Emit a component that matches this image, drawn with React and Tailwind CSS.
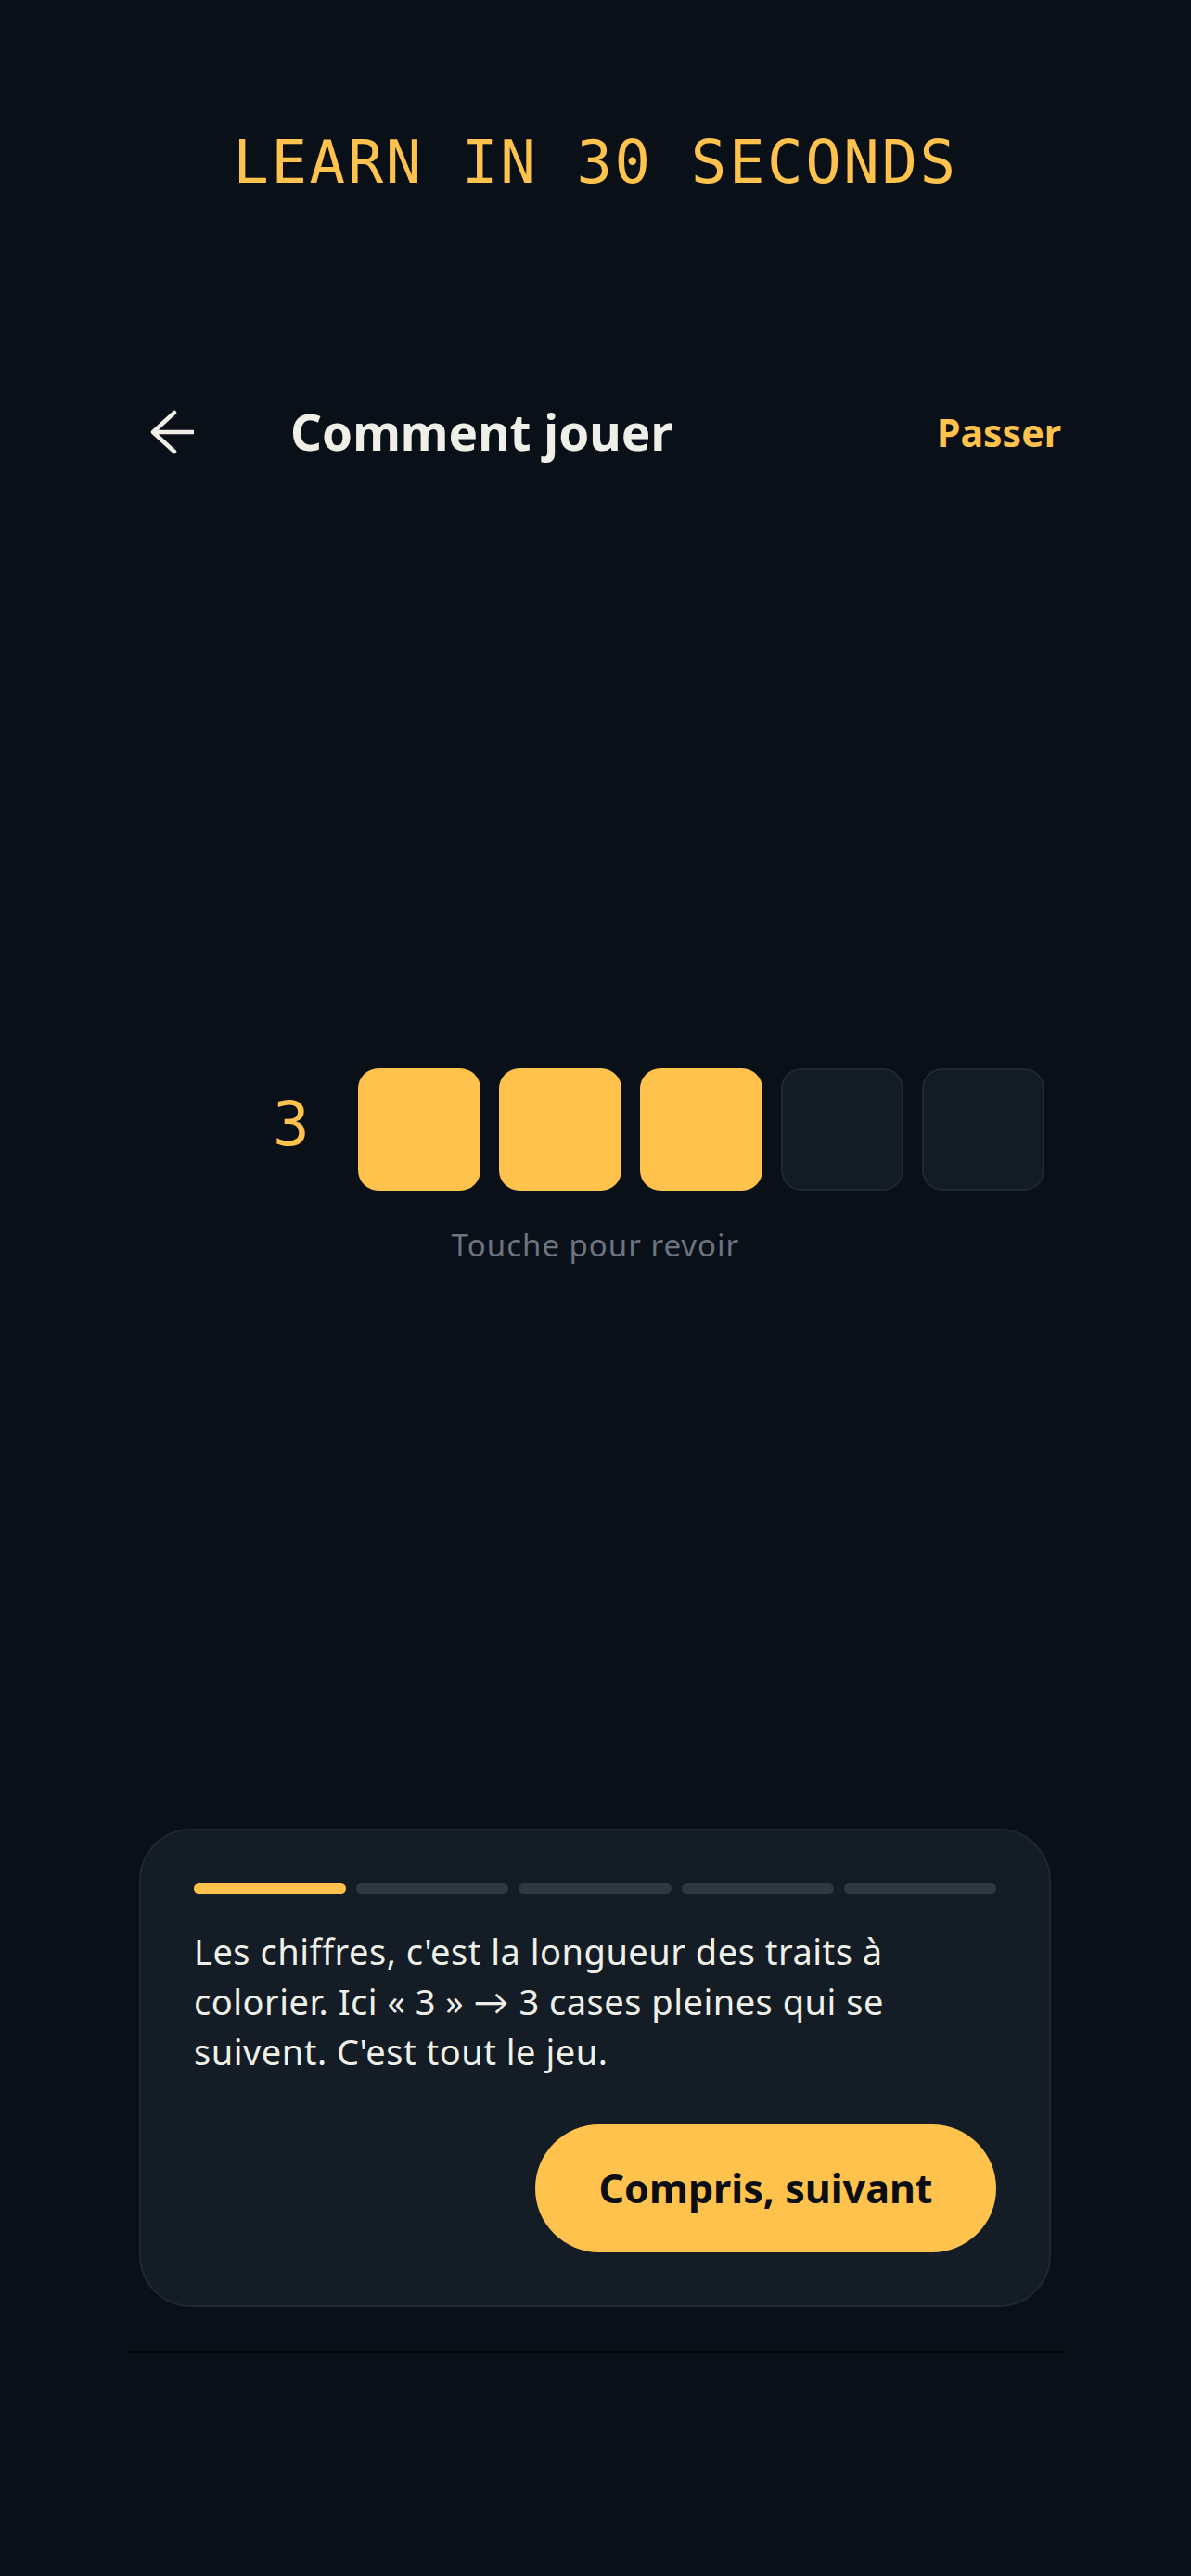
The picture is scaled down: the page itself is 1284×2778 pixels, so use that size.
import React from "react";

const MONO = { fontFamily: '"DejaVu Sans Mono", "Liberation Mono", monospace' };
const SANS = { fontFamily: '"Noto Sans", Lato, sans-serif' };

function BackArrow() {
  return (
    <svg width="52" height="50" viewBox="0 0 52 50" fill="none">
      <path
        d="M31 4 L8 25 L31 46 M8 25 H51"
        stroke="#EEF0E8"
        strokeWidth="4.5"
        strokeLinecap="round"
        strokeLinejoin="round"
      />
    </svg>
  );
}

function Cell({ filled }) {
  return (
    <div
      className={`size-[132px] rounded-[22px] ${
        filled ? "bg-[#FFC24D]" : "bg-[#131B25] border-2 border-[#1E2833]"
      }`}
    />
  );
}

export default function App() {
  const cells = [true, true, true, false, false];
  const steps = [true, false, false, false, false];

  return (
    <div className="min-h-[2778px] bg-[#0A1018] flex flex-col" style={SANS}>
      {/* top label */}
      <div
        className="pt-[143px] text-center text-[64px] leading-[64px] tracking-[2.6px] text-[#FFC24D]"
        style={MONO}
      >
        LEARN IN 30 SECONDS
      </div>

      {/* header */}
      <div className="mt-[226px] h-[66px] flex items-center pl-[150px] pr-[140px]">
        <button className="w-[66px] h-[66px] flex items-center justify-center">
          <BackArrow />
        </button>
        <h1 className="ml-[97px] text-[53px] leading-[66px] font-bold text-[#EEF0E8]">
          Comment jouer
        </h1>
        <button className="ml-auto text-[41px] leading-[66px] font-bold text-[#FFC24D]">
          Passer
        </button>
      </div>

      {/* example row */}
      <div className="mt-[653px] flex items-center pl-[294px]">
        <span
          className="w-[92px] mb-[11px] text-[66px] leading-none text-[#FFC24D]"
          style={MONO}
        >
          3
        </span>
        <div className="flex gap-[20px]">
          {cells.map((f, i) => (
            <Cell key={i} filled={f} />
          ))}
        </div>
      </div>
      <div className="mt-[39px] text-center text-[33px] leading-[40px] tracking-[1px] text-[#6B7480]">
        Touche pour revoir
      </div>

      {/* explanation card */}
      <div className="mt-[609px] ml-[150px] w-[983px] rounded-[56px] border-2 border-[#1E2833] bg-[#141C26] px-[57px] pt-[57px] pb-[57px] flex flex-col">
        <div className="flex gap-[11px]">
          {steps.map((on, i) => (
            <div
              key={i}
              className={`flex-1 h-[11px] rounded-full ${
                on ? "bg-[#FFC24D]" : "bg-[#2E3742]"
              }`}
            />
          ))}
        </div>
        <p className="mt-[35px] text-[38px] leading-[54px] tracking-[0.5px] text-[#EEF0E8]">
          Les chiffres, c'est la longueur des traits à
          <br />
          colorier. Ici « 3 » → 3 cases pleines qui se
          <br />
          suivent. C'est tout le jeu.
        </p>
        <button className="mt-[52px] self-end w-[497px] h-[138px] rounded-full bg-[#FFC24D] text-[43px] font-bold text-[#0B0F14]">
          Compris, suivant
        </button>
      </div>

      <div className="mt-[47px] ml-[139px] w-[1007px] h-[3px] bg-[#020406]" />
    </div>
  );
}
